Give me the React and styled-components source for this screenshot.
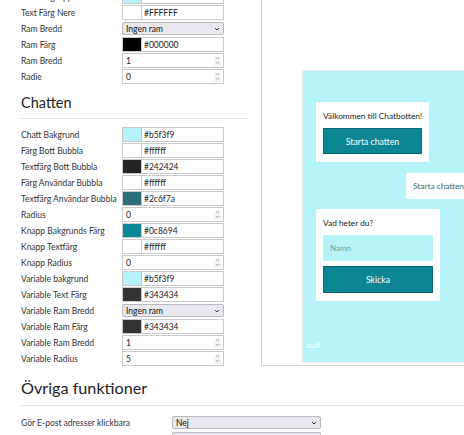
import React from "react";
import styled, { createGlobalStyle } from "styled-components";

const Global = createGlobalStyle`
  html, body { margin: 0; padding: 0; background: #fff; overflow: hidden; }
  body { font-family: Lato, "Noto Sans", sans-serif; color: #333; }
  * { box-sizing: border-box; }
`;

const Page = styled.div`
  width: 464px;
  margin-top: -11px;
  padding-left: 21px;
`;

const Top = styled.div`
  display: grid;
  grid-template-columns: 227px 1fr;
  column-gap: 13px;
`;

const LeftCol = styled.div`
  display: flex;
  flex-direction: column;
`;

const Fields = styled.div`
  display: flex;
  flex-direction: column;
  gap: 1px;
`;

const Row = styled.div`
  display: grid;
  grid-template-columns: ${(p) => p.$labelW || 101}px ${(p) => p.$fieldW || 102}px;
  height: 15px;
  align-items: center;
`;

const Label = styled.span`
  font-size: 8.5px;
  color: #333;
  white-space: nowrap;
  overflow: hidden;
`;

const ColorField = styled.div`
  display: flex;
  height: 15px;
`;

const Swatch = styled.div`
  width: 20px;
  height: 15px;
  border: 1px solid #cacaca;
  background: ${(p) => p.$c};
`;

const TextBox = styled.div`
  flex: 1;
  height: 15px;
  border: 1px solid #cacaca;
  border-left: none;
  background: #fff;
  font-size: 8.5px;
  color: #222;
  padding-left: 2px;
  display: flex;
  align-items: center;
`;

const NumberBox = styled.div`
  height: 15px;
  border: 1px solid #cacaca;
  background: #fff;
  font-size: 8.5px;
  color: #222;
  padding: 0 2px 0 3px;
  display: flex;
  align-items: center;
  justify-content: space-between;
`;

const Spin = styled.span`
  width: 7px;
  height: 10px;
  display: flex;
  align-items: center;
  justify-content: center;
  border-radius: 1px;
  background: #f3f3f3;
`;

const SelectBox = styled.div`
  height: 13px;
  border: 1px solid #b9b9c2;
  border-radius: 2px;
  background: #e9e9ed;
  font-size: 8.5px;
  color: #111;
  padding: 0 3px 0 3px;
  display: flex;
  align-items: center;
  justify-content: space-between;
`;

const Heading = styled.h2`
  margin: ${(p) => p.$mt}px 0 0;
  font-size: ${(p) => p.$size}px;
  line-height: ${(p) => p.$lh}px;
  font-weight: 400;
  color: #222;
`;

const Rule = styled.hr`
  margin: ${(p) => p.$mt}px 0 ${(p) => p.$mb}px;
  border: none;
  border-top: 1px solid #e2e2e2;
  height: 0;
`;

const Panel = styled.div`
  border-left: 1px solid #cfcfd7;
  border-bottom: 1px solid #cfcfd7;
  display: flex;
  flex-direction: column;
  justify-content: flex-end;
  padding: 0 0 3px 41px;
  overflow: hidden;
`;

const ChatBox = styled.div`
  width: 190px;
  height: 291px;
  background: #b5f3f9;
  box-shadow: 0 0 2px rgba(0, 0, 0, 0.25);
  display: flex;
  flex-direction: column;
  padding: 31px 13px 10px;
`;

const Bubble = styled.div`
  background: #fff;
  width: ${(p) => p.$w}px;
  padding: 8px 7px;
  align-self: flex-start;
  margin-top: ${(p) => p.$mt || 0}px;
  display: flex;
  flex-direction: column;
`;

const BubbleText = styled.div`
  font-size: 8.3px;
  line-height: 10px;
  color: #242424;
  margin: 1px 0 7px;
  white-space: nowrap;
`;

const UserBubble = styled.div`
  align-self: flex-end;
  margin-top: 11px;
  margin-right: 9px;
  background: #fff;
  height: 26px;
  padding: 0 7px;
  display: flex;
  align-items: center;
  font-size: 8.3px;
  color: #2c6f7a;
  white-space: nowrap;
`;

const ChatButton = styled.div`
  height: ${(p) => p.$h}px;
  background: #0c8694;
  border: 1px solid #0a6773;
  color: #fff;
  font-size: 8.7px;
  display: flex;
  align-items: center;
  justify-content: center;
  margin-top: ${(p) => p.$mt || 0}px;
`;

const NameInput = styled.div`
  height: 26px;
  background: #b5f3f9;
  border-radius: 2px;
  font-size: 8px;
  color: #6a9ea4;
  padding-left: 7px;
  display: flex;
  align-items: center;
`;

const Footer = styled.div`
  margin-top: auto;
  margin-bottom: 2px;
  font-size: 8px;
  color: #fff;
  margin-left: -10px;
`;

const Bottom = styled.div`
  display: flex;
  flex-direction: column;
`;

const Chevron = () => (
  <svg width="6" height="4" viewBox="0 0 6 4">
    <path d="M1 1 L3 3 L5 1" fill="none" stroke="#333" strokeWidth="1" />
  </svg>
);

const Spinner = () => (
  <Spin>
    <svg width="5" height="9" viewBox="0 0 5 9">
      <path d="M1 3 L2.5 1.5 L4 3 M1 6 L2.5 7.5 L4 6" fill="none" stroke="#9a9a9a" strokeWidth="0.8" />
    </svg>
  </Spin>
);

const Field = ({ f }) => {
  if (f.type === "color")
    return (
      <ColorField>
        <Swatch $c={f.value} />
        <TextBox>{f.text}</TextBox>
      </ColorField>
    );
  if (f.type === "select")
    return (
      <SelectBox>
        {f.value}
        <Chevron />
      </SelectBox>
    );
  return (
    <NumberBox>
      {f.value}
      <Spinner />
    </NumberBox>
  );
};

const first = [
  { label: "Text Färg Uppe", type: "color", value: "#b5f3f9", text: "#b5f3f9" },
  { label: "Text Färg Nere", type: "color", value: "#ffffff", text: "#FFFFFF" },
  { label: "Ram Bredd", type: "select", value: "Ingen ram" },
  { label: "Ram Färg", type: "color", value: "#000000", text: "#000000" },
  { label: "Ram Bredd", type: "number", value: "1" },
  { label: "Radie", type: "number", value: "0" },
];

const chat = [
  { label: "Chatt Bakgrund", type: "color", value: "#b5f3f9", text: "#b5f3f9" },
  { label: "Färg Bott Bubbla", type: "color", value: "#ffffff", text: "#ffffff" },
  { label: "Textfärg Bott Bubbla", type: "color", value: "#242424", text: "#242424" },
  { label: "Färg Användar Bubbla", type: "color", value: "#ffffff", text: "#ffffff" },
  { label: "Textfärg Användar Bubbla", type: "color", value: "#2c6f7a", text: "#2c6f7a" },
  { label: "Radius", type: "number", value: "0" },
  { label: "Knapp Bakgrunds Färg", type: "color", value: "#0c8694", text: "#0c8694" },
  { label: "Knapp Textfärg", type: "color", value: "#ffffff", text: "#ffffff" },
  { label: "Knapp Radius", type: "number", value: "0" },
  { label: "Variable bakgrund", type: "color", value: "#b5f3f9", text: "#b5f3f9" },
  { label: "Variable Text Färg", type: "color", value: "#343434", text: "#343434" },
  { label: "Variable Ram Bredd", type: "select", value: "Ingen ram" },
  { label: "Variable Ram Färg", type: "color", value: "#343434", text: "#343434" },
  { label: "Variable Ram Bredd", type: "number", value: "1" },
  { label: "Variable Radius", type: "number", value: "5" },
];

const other = [
  { label: "Gör E-post adresser klickbara", value: "Nej" },
  { label: "Gör URL:er klickbara", value: "Nej" },
];

export default function App() {
  return (
    <>
      <Global />
      <Page>
        <Top>
          <LeftCol>
            <Fields>
              {first.map((f, i) => (
                <Row key={i}>
                  <Label>{f.label}</Label>
                  <Field f={f} />
                </Row>
              ))}
            </Fields>
            <Heading $mt={10} $size={14.5} $lh={18}>Chatten</Heading>
            <Rule $mt={6} $mb={8} />
            <Fields>
              {chat.map((f, i) => (
                <Row key={i}>
                  <Label>{f.label}</Label>
                  <Field f={f} />
                </Row>
              ))}
            </Fields>
          </LeftCol>
          <Panel>
            <ChatBox>
              <Bubble $w={113}>
                <BubbleText>Välkommen till Chatbotten!</BubbleText>
                <ChatButton $h={26}>Starta chatten</ChatButton>
              </Bubble>
              <UserBubble>Starta chatten</UserBubble>
              <Bubble $w={124} $mt={10}>
                <BubbleText>Vad heter du?</BubbleText>
                <NameInput>Namn</NameInput>
                <ChatButton $h={27} $mt={5}>Skicka</ChatButton>
              </Bubble>
              <Footer>asdf</Footer>
            </ChatBox>
          </Panel>
        </Top>
        <Bottom>
          <Heading $mt={12} $size={16.2} $lh={20}>Övriga funktioner</Heading>
          <Rule $mt={7} $mb={9} />
          <Fields>
            {other.map((o, i) => (
              <Row key={i} $labelW={151} $fieldW={149}>
                <Label>{o.label}</Label>
                <SelectBox>
                  {o.value}
                  <Chevron />
                </SelectBox>
              </Row>
            ))}
          </Fields>
        </Bottom>
      </Page>
    </>
  );
}
